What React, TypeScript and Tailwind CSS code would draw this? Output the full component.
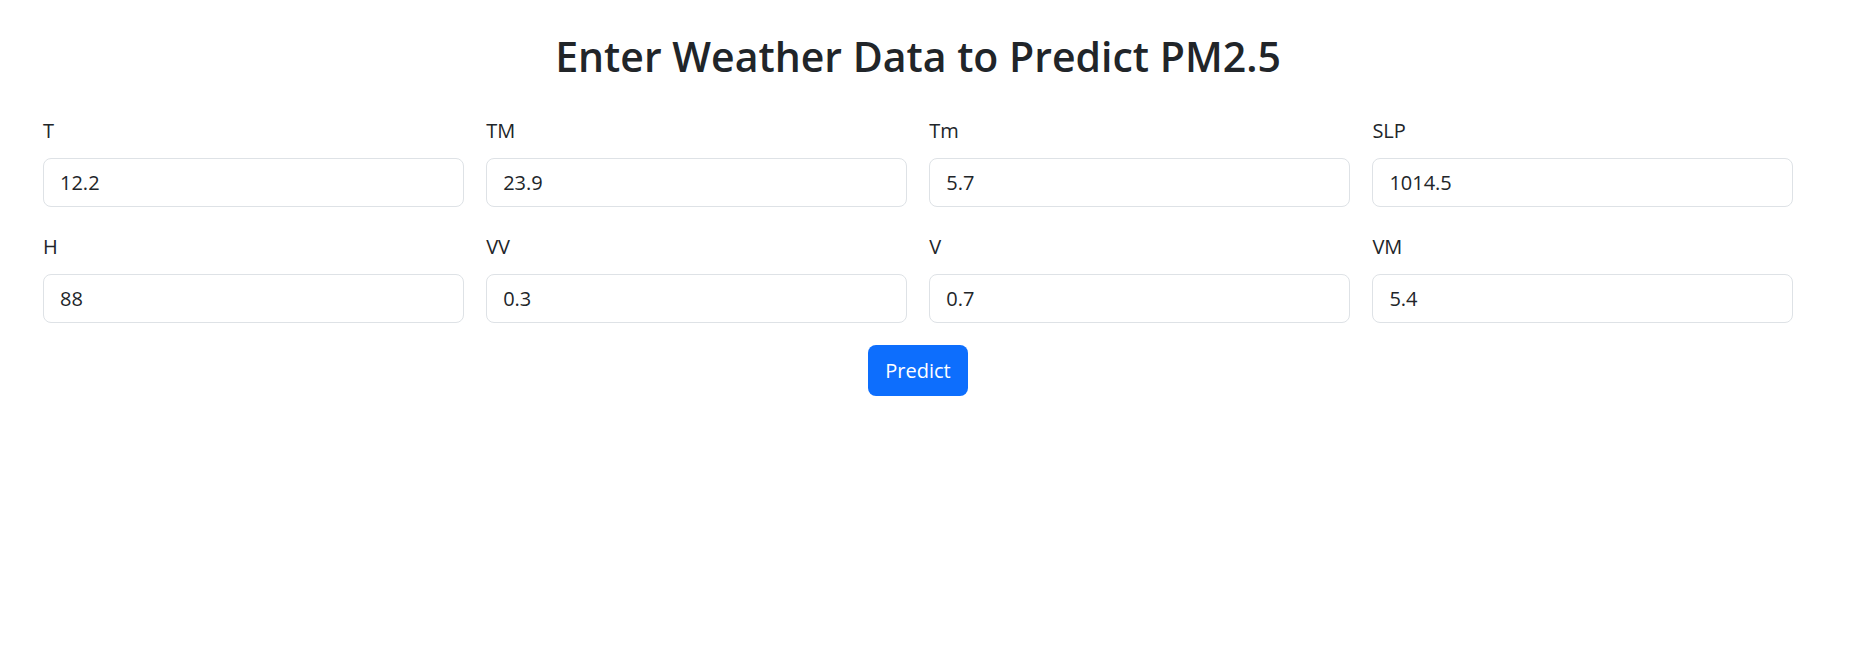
const fields = [
  { label: "T", value: "12.2" },
  { label: "TM", value: "23.9" },
  { label: "Tm", value: "5.7" },
  { label: "SLP", value: "1014.5" },
  { label: "H", value: "88" },
  { label: "VV", value: "0.3" },
  { label: "V", value: "0.7" },
  { label: "VM", value: "5.4" },
];

export default function App() {
  return (
    <div
      className="min-h-[663px] bg-white pl-[43px] pr-[71px] pt-[32px] text-[#212529]"
      style={{ fontFamily: '"Open Sans", "Noto Sans", Arial, sans-serif' }}
    >
      <h1 className="text-center text-[41px] font-semibold leading-[49px]">
        Enter Weather Data to Predict PM2.5
      </h1>

      <form className="mt-[35px]">
        <div className="grid grid-cols-4 gap-x-[22.5px] gap-y-[25px]">
          {fields.map((f) => (
            <div key={f.label}>
              <label className="mb-[12px] block text-[20px] leading-[30px]">{f.label}</label>
              <input
                type="text"
                defaultValue={f.value}
                className="block h-[49px] w-full rounded-[8px] border border-[#dee2e6] bg-white px-[16px] text-[20px] text-[#212529] outline-none"
              />
            </div>
          ))}
        </div>

        <div className="mt-[22px] flex justify-center">
          <button
            type="button"
            className="h-[51px] w-[100px] rounded-[8px] bg-[#0d6efd] text-[20px] text-white"
          >
            Predict
          </button>
        </div>
      </form>
    </div>
  );
}
